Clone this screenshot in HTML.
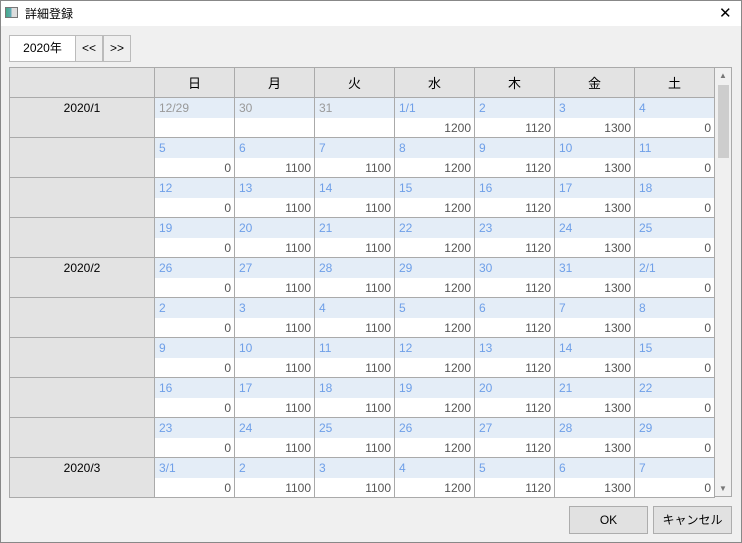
<!DOCTYPE html>
<html><head><meta charset="utf-8"><style>
*{margin:0;padding:0;box-sizing:border-box}
body{width:742px;height:543px;background:#f0f0f0;font-family:"Liberation Sans","Noto Sans CJK JP",sans-serif;font-size:12px;position:relative;overflow:hidden}
.frame{position:absolute;left:0;top:0;width:742px;height:543px;border:1px solid #888;pointer-events:none}
.title{position:absolute;left:0;top:0;width:742px;height:26px;background:#fff}
.title .t{position:absolute;left:25px;top:5px;font-size:12px;color:#000}
.title .ic{position:absolute;left:5px;top:7px;width:13px;height:11px;border:1px solid #777;background:linear-gradient(90deg,#4a8 0,#6ab 50%,#ddd 50%)}
.title .x{position:absolute;left:719px;top:4px;font-size:15px}
.yr{position:absolute;left:9px;top:35px;width:67px;height:27px;background:#fff;border:1px solid #bbb;text-align:center;line-height:25px}
.btn{position:absolute;top:35px;height:27px;width:28px;border:1px solid #bbb;background:#efefef;text-align:center;line-height:25px;font-size:12px}
table{position:absolute;left:9px;top:67px;border-collapse:collapse;table-layout:fixed;background:#fff}
td{border:1px solid #aaa;padding:0;height:40px;vertical-align:top}
th{border:1px solid #aaa;background:#e3e3e3;font-weight:normal;height:30px;width:80px;font-size:13px}
td.l{background:#e3e3e3;width:145px;text-align:center;line-height:20px;font-size:12px}
td .d{height:20px;background:#e4edf7;color:#6e9fe8;padding-left:4px;line-height:20px}
td .d.g{color:#999}
td .a{height:19px;text-align:right;padding-right:3px;color:#555;line-height:20px}
.sb{position:absolute;left:715px;top:67px;width:17px;height:430px;background:#f0f0f0;border:1px solid #aaa;border-left:none}
.sb .th{position:absolute;left:3px;top:17px;width:11px;height:73px;background:#cdcdcd}
.sb .u,.sb .dn{position:absolute;left:4px;font-size:8px;color:#777}
.ok{position:absolute;top:506px;height:28px;width:79px;border:1px solid #adadad;background:#e1e1e1;text-align:center;line-height:26px}
</style></head><body>
<div class="title"><div class="ic"></div><div class="t">詳細登録</div><div class="x">✕</div></div>
<div class="yr">2020年</div>
<div class="btn" style="left:75px">&lt;&lt;</div>
<div class="btn" style="left:103px">&gt;&gt;</div>
<table>
<tr><th style="width:145px"></th><th>日</th><th>月</th><th>火</th><th>水</th><th>木</th><th>金</th><th>土</th></tr>
<tr><td class="l">2020/1</td><td><div class="d g">12/29</div><div class="a"></div></td><td><div class="d g">30</div><div class="a"></div></td><td><div class="d g">31</div><div class="a"></div></td><td><div class="d">1/1</div><div class="a">1200</div></td><td><div class="d">2</div><div class="a">1120</div></td><td><div class="d">3</div><div class="a">1300</div></td><td><div class="d">4</div><div class="a">0</div></td></tr>
<tr><td class="l"></td><td><div class="d">5</div><div class="a">0</div></td><td><div class="d">6</div><div class="a">1100</div></td><td><div class="d">7</div><div class="a">1100</div></td><td><div class="d">8</div><div class="a">1200</div></td><td><div class="d">9</div><div class="a">1120</div></td><td><div class="d">10</div><div class="a">1300</div></td><td><div class="d">11</div><div class="a">0</div></td></tr>
<tr><td class="l"></td><td><div class="d">12</div><div class="a">0</div></td><td><div class="d">13</div><div class="a">1100</div></td><td><div class="d">14</div><div class="a">1100</div></td><td><div class="d">15</div><div class="a">1200</div></td><td><div class="d">16</div><div class="a">1120</div></td><td><div class="d">17</div><div class="a">1300</div></td><td><div class="d">18</div><div class="a">0</div></td></tr>
<tr><td class="l"></td><td><div class="d">19</div><div class="a">0</div></td><td><div class="d">20</div><div class="a">1100</div></td><td><div class="d">21</div><div class="a">1100</div></td><td><div class="d">22</div><div class="a">1200</div></td><td><div class="d">23</div><div class="a">1120</div></td><td><div class="d">24</div><div class="a">1300</div></td><td><div class="d">25</div><div class="a">0</div></td></tr>
<tr><td class="l">2020/2</td><td><div class="d">26</div><div class="a">0</div></td><td><div class="d">27</div><div class="a">1100</div></td><td><div class="d">28</div><div class="a">1100</div></td><td><div class="d">29</div><div class="a">1200</div></td><td><div class="d">30</div><div class="a">1120</div></td><td><div class="d">31</div><div class="a">1300</div></td><td><div class="d">2/1</div><div class="a">0</div></td></tr>
<tr><td class="l"></td><td><div class="d">2</div><div class="a">0</div></td><td><div class="d">3</div><div class="a">1100</div></td><td><div class="d">4</div><div class="a">1100</div></td><td><div class="d">5</div><div class="a">1200</div></td><td><div class="d">6</div><div class="a">1120</div></td><td><div class="d">7</div><div class="a">1300</div></td><td><div class="d">8</div><div class="a">0</div></td></tr>
<tr><td class="l"></td><td><div class="d">9</div><div class="a">0</div></td><td><div class="d">10</div><div class="a">1100</div></td><td><div class="d">11</div><div class="a">1100</div></td><td><div class="d">12</div><div class="a">1200</div></td><td><div class="d">13</div><div class="a">1120</div></td><td><div class="d">14</div><div class="a">1300</div></td><td><div class="d">15</div><div class="a">0</div></td></tr>
<tr><td class="l"></td><td><div class="d">16</div><div class="a">0</div></td><td><div class="d">17</div><div class="a">1100</div></td><td><div class="d">18</div><div class="a">1100</div></td><td><div class="d">19</div><div class="a">1200</div></td><td><div class="d">20</div><div class="a">1120</div></td><td><div class="d">21</div><div class="a">1300</div></td><td><div class="d">22</div><div class="a">0</div></td></tr>
<tr><td class="l"></td><td><div class="d">23</div><div class="a">0</div></td><td><div class="d">24</div><div class="a">1100</div></td><td><div class="d">25</div><div class="a">1100</div></td><td><div class="d">26</div><div class="a">1200</div></td><td><div class="d">27</div><div class="a">1120</div></td><td><div class="d">28</div><div class="a">1300</div></td><td><div class="d">29</div><div class="a">0</div></td></tr>
<tr><td class="l">2020/3</td><td><div class="d">3/1</div><div class="a">0</div></td><td><div class="d">2</div><div class="a">1100</div></td><td><div class="d">3</div><div class="a">1100</div></td><td><div class="d">4</div><div class="a">1200</div></td><td><div class="d">5</div><div class="a">1120</div></td><td><div class="d">6</div><div class="a">1300</div></td><td><div class="d">7</div><div class="a">0</div></td></tr>
</table>
<div class="sb"><div class="u" style="top:3px">▲</div><div class="th"></div><div class="dn" style="top:416px">▼</div></div>
<div class="ok" style="left:569px">OK</div>
<div class="ok" style="left:653px">キャンセル</div>
<div class="frame"></div>
</body></html>
